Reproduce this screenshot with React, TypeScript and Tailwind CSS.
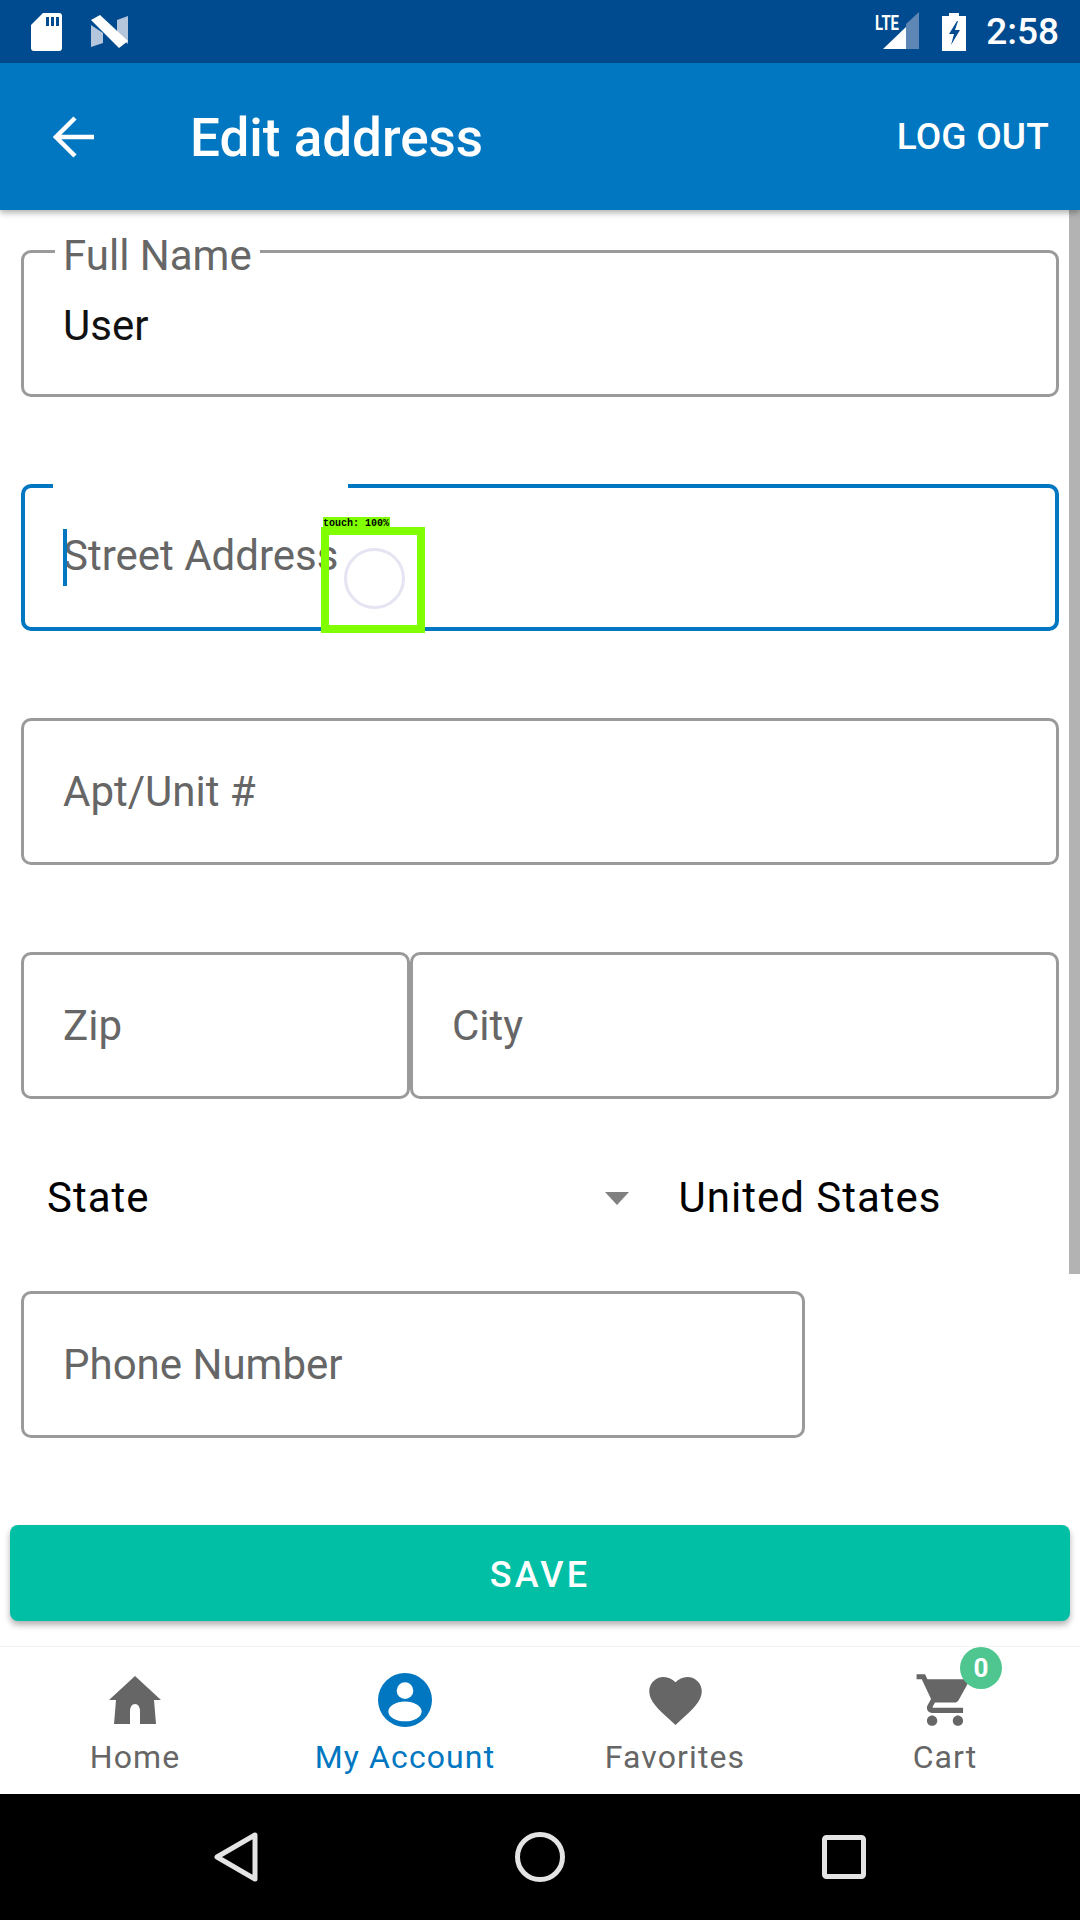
const fontStack = "font-['Roboto',sans-serif]";

function Field({
  placeholder,
  value,
  label,
  className = "",
}: {
  placeholder?: string;
  value?: string;
  label?: string;
  className?: string;
}) {
  return (
    <div
      className={`relative flex h-[147px] items-center rounded-[10px] border-[3px] border-[#9a9a9a] pl-[39px] ${className}`}
    >
      {label ? (
        <span className="absolute left-[31px] top-[-17px] bg-white px-[8px] text-[42px] leading-[40px] text-[#666666]">
          {label}
        </span>
      ) : null}
      {value ? (
        <span className="mt-[4px] text-[42px] leading-[48px] text-[#111111]">{value}</span>
      ) : (
        <span className="text-[42px] leading-[48px] text-[#666666]">{placeholder}</span>
      )}
    </div>
  );
}

function StatusBar() {
  return (
    <div className="flex h-[63px] shrink-0 items-center justify-between bg-[#004b8f] pl-[31px] pr-[21px]">
      <div className="flex items-center gap-[29px]">
        <svg width="31" height="39" viewBox="0 0 31 39">
          <path
            fill="#fff"
            d="M12 1h16a3 3 0 0 1 3 3v32a3 3 0 0 1-3 3H3a3 3 0 0 1-3-3V13Z"
          />
          <path fill="#004b8f" d="M15 5h3v9h-3zM20 5h3v9h-3zM25 5h3v9h-3z" />
        </svg>
        <svg width="38" height="33" viewBox="0 0 38 33">
          <path fill="#b3c6dc" d="M0 10 12 18v10L0 32ZM37 1v28L26 20V5Z" />
          <path fill="#fff" d="M0 5 9 0l28 26-9 7Z" />
        </svg>
      </div>
      <div className="flex items-center">
        <svg width="46" height="38" viewBox="0 0 46 38" className="mt-[-2px] overflow-visible">
          <path fill="#5f87b5" d="M45 0v37H32V12Z" />
          <path fill="#fff" d="M32 15v22H9Z" />
          <text x="1" y="18" fill="#fff" fontSize="21" fontWeight="700" fontFamily="Roboto" textLength="24" lengthAdjust="spacingAndGlyphs">
            LTE
          </text>
        </svg>
        <svg width="24" height="38" viewBox="0 0 24 38" className="ml-[22px]">
          <path fill="#fff" d="M7 0h10v3h7v35H0V3h7Z" />
          <path fill="#004b8f" d="M15 8 7 21h5l-3 11 9-15h-5l3-9Z" />
        </svg>
        <span className="ml-[20px] text-[37px] font-medium leading-[42px] text-white">2:58</span>
      </div>
    </div>
  );
}

function AppBar() {
  return (
    <header className="relative z-10 flex h-[147px] shrink-0 items-center bg-[#0077c0] shadow-[0_3px_6px_rgba(0,0,0,0.3)]">
      <svg width="42" height="42" viewBox="0 0 42 42" className="ml-[53px]">
        <path d="M41 21H3M22 2 3 21l19 19" fill="none" stroke="#fff" strokeWidth="4.5" />
      </svg>
      <h1 className="ml-[95px] mt-[3px] text-[53px] font-medium leading-[60px] text-white">Edit address</h1>
      <button type="button" className="ml-auto mr-[31px] mt-[1px] text-[37px] font-medium leading-[42px] tracking-[0.2px] text-white">
        LOG OUT
      </button>
    </header>
  );
}

function TouchMarker() {
  return (
    <div className="absolute left-[321px] top-[307px] h-[116px] w-[104px]">
      <div className="ml-[2px] h-[10px] w-[67px] bg-[#7fff00] font-['Liberation_Mono',monospace] text-[10px] font-bold leading-[13px] text-black">
        touch: 100%
      </div>
      <div className="flex h-[106px] w-[104px] items-center justify-center border-[8px] border-[#7fff00]">
        <div className="mb-[4px] ml-[2px] h-[61px] w-[61px] rounded-full border-[3px] border-[#e4e4f2]" />
      </div>
    </div>
  );
}

function NavItem({
  label,
  active,
  children,
}: {
  label: string;
  active?: boolean;
  children: React.ReactNode;
}) {
  return (
    <div className="relative flex w-[270px] flex-col items-center pt-[26px]">
      <div className="flex h-[54px] w-[54px] items-center justify-center">{children}</div>
      <span
        className={`mt-[10px] text-[32px] leading-[40px] tracking-[1.1px] ${active ? "text-[#0077c0]" : "text-[#666666]"}`}
      >
        {label}
      </span>
    </div>
  );
}

function BottomNav() {
  return (
    <nav className="flex h-[148px] shrink-0 border-t-[1px] border-[#f3f3f3] bg-white">
      <NavItem label="Home">
        <svg width="54" height="48" viewBox="0 0 54 48" className="shrink-0">
          <path
            fill="#666"
            d="M27 0 53 24H46l2 24H32V36q0-8-5-8t-5 8v12H6L8 24H1Z"
          />
        </svg>
      </NavItem>
      <NavItem label="My Account" active>
        <svg width="54" height="54" viewBox="0 0 52 52" className="shrink-0">
          <circle cx="26" cy="26" r="26" fill="#0077c0" />
          <circle cx="26" cy="17" r="8" fill="#fff" />
          <ellipse cx="26" cy="37" rx="16" ry="9.5" fill="#fff" />
        </svg>
      </NavItem>
      <NavItem label="Favorites">
        <svg width="63" height="63" viewBox="0 0 24 24" className="shrink-0">
          <path
            fill="#666"
            d="m12 21.35-1.45-1.32C5.4 15.36 2 12.28 2 8.5 2 5.42 4.42 3 7.5 3c1.74 0 3.41.81 4.5 2.09C13.09 3.81 14.76 3 16.5 3 19.58 3 22 5.42 22 8.5c0 3.78-3.4 6.86-8.55 11.54z"
          />
        </svg>
      </NavItem>
      <NavItem label="Cart">
        <svg width="62" height="62" viewBox="0 0 24 24" className="shrink-0">
          <path
            fill="#666"
            d="M7 18c-1.1 0-1.99.9-1.99 2S5.9 22 7 22s2-.9 2-2-.9-2-2-2M1 2v2h2l3.6 7.59-1.35 2.45c-.16.28-.25.61-.25.96 0 1.1.9 2 2 2h12v-2H7.42c-.14 0-.25-.11-.25-.25l.03-.12.9-1.63h7.45c.75 0 1.41-.41 1.75-1.03l3.58-6.49c.08-.14.12-.31.12-.48 0-.55-.45-1-1-1H5.21l-.94-2zm16 16c-1.1 0-1.99.9-1.99 2s.89 2 1.99 2 2-.9 2-2-.9-2-2-2"
          />
        </svg>
        <span className="absolute left-[150px] top-[0px] flex h-[42px] w-[42px] items-center justify-center rounded-full bg-[#4fc68f] text-[26px] font-bold leading-none text-white">
          0
        </span>
      </NavItem>
    </nav>
  );
}

function SystemNav() {
  return (
    <div className="relative flex h-[126px] shrink-0 items-center bg-black">
      <svg width="48" height="52" viewBox="0 0 48 52" className="ml-[213px]">
        <path d="M42 4v44L4 26Z" fill="none" stroke="#e4e4e4" strokeWidth="5" strokeLinejoin="round" />
      </svg>
      <svg width="50" height="50" viewBox="0 0 50 50" className="ml-[254px]">
        <circle cx="25" cy="25" r="22.5" fill="none" stroke="#e4e4e4" strokeWidth="5" />
      </svg>
      <svg width="44" height="44" viewBox="0 0 44 44" className="ml-[257px]">
        <rect x="2.5" y="2.5" width="39" height="39" rx="2" fill="none" stroke="#e4e4e4" strokeWidth="5" />
      </svg>
    </div>
  );
}

export default function App() {
  return (
    <div className={`flex h-[1920px] w-[1080px] flex-col overflow-hidden bg-white ${fontStack}`}>
      <StatusBar />
      <AppBar />
      <main className="relative flex-1">
        <div className="absolute right-0 top-0 h-[1064px] w-[11px] bg-[#b3b3b3]" />
        <div className="flex flex-col pl-[21px] pt-[40px]">
          <Field label="Full Name" value="User" className="w-[1038px]" />

          <div className="relative mt-[87px] flex h-[147px] w-[1038px] items-center rounded-[10px] border-[4px] border-[#0077c0] pl-[38px]">
            <div className="absolute left-[28px] top-[-4px] h-[4px] w-[295px] bg-white" />
            <div className="absolute left-[38px] top-[41px] h-[57px] w-[4px] bg-[#0077c0]" />
            <span className="mt-[-3px] text-[42px] leading-[48px] text-[#666666]">Street Address</span>
          </div>

          <Field placeholder="Apt/Unit #" className="mt-[87px] w-[1038px]" />

          <div className="mt-[87px] flex">
            <Field placeholder="Zip" className="w-[389px]" />
            <Field placeholder="City" className="w-[649px] pl-[38px]" />
          </div>

          <div className="flex h-[192px] items-center pt-[6px]">
            <span className="ml-[26px] text-[42px] leading-[48px] tracking-[1px] text-black">State</span>
            <span className="ml-[455px] h-0 w-0 border-x-[12px] border-t-[13px] border-x-transparent border-t-[#808080]" />
            <span className="ml-[50px] text-[42px] leading-[48px] tracking-[1px] text-black">United States</span>
          </div>

          <Field placeholder="Phone Number" className="w-[784px]" />
        </div>

        <button
          type="button"
          className="mx-[10px] mt-[87px] flex h-[96px] w-[1060px] items-center justify-center rounded-[8px] bg-[#00bfa5] pt-[3px] text-[36px] font-medium leading-[40px] tracking-[3.2px] text-white shadow-[0_4px_6px_rgba(0,0,0,0.3)]"
        >
          SAVE
        </button>

        <TouchMarker />
      </main>
      <BottomNav />
      <SystemNav />
    </div>
  );
}
